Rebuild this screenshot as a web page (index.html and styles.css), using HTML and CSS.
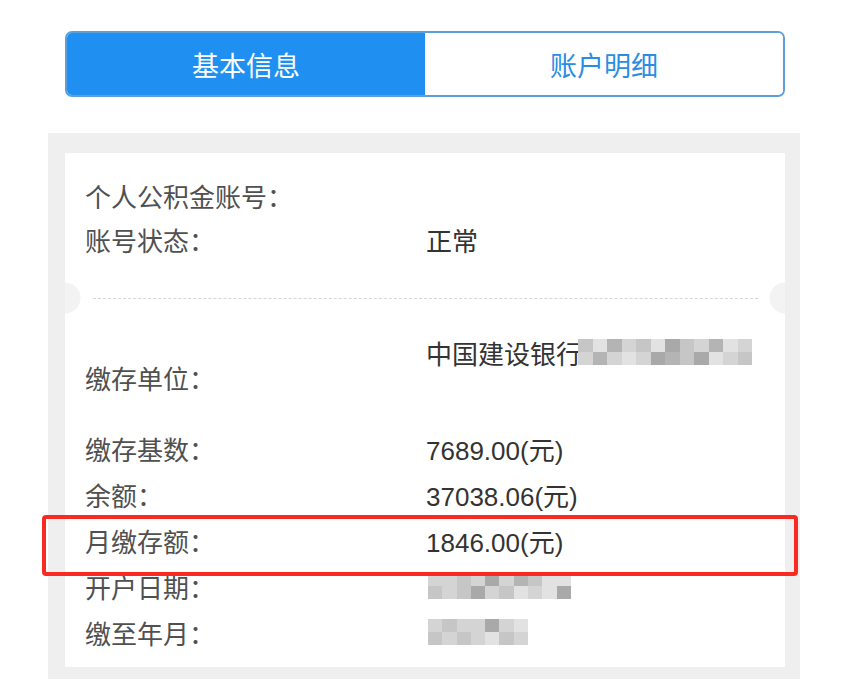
FILE: index.html
```html
<!DOCTYPE html>
<html lang="zh-CN">
<head>
  <meta charset="UTF-8">
  <meta name="viewport" content="width=device-width, initial-scale=1.0">
  <title>基本信息</title>
  <link rel="stylesheet" href="styles.css">
</head>
<body>
  <div class="tabs">
    <div class="tab active">基本信息</div>
    <div class="tab">账户明细</div>
  </div>

  <div class="panel">
    <div class="card">
      <div class="section top-section">
        <div class="row">
          <span class="label">个人公积金账号：</span>
          <span class="value"></span>
        </div>
        <div class="row">
          <span class="label">账号状态：</span>
          <span class="value">正常</span>
        </div>
      </div>

      <div class="divider"></div>

      <div class="section bottom-section">
        <div class="row tall">
          <span class="label">缴存单位：</span>
          <span class="value top">中国建设银行<span class="mosaic wide">
            <i class="m2"></i><i class="m4"></i><i class="m1"></i><i class="m3"></i><i class="m2"></i><i class="m4"></i><i class="m5"></i><i class="m2"></i><i class="m3"></i><i class="m1"></i><i class="m4"></i><i class="m3"></i>
            <i class="m3"></i><i class="m1"></i><i class="m3"></i><i class="m4"></i><i class="m3"></i><i class="m5"></i><i class="m1"></i><i class="m2"></i><i class="m5"></i><i class="m4"></i><i class="m3"></i><i class="m2"></i>
          </span></span>
        </div>
        <div class="row">
          <span class="label">缴存基数：</span>
          <span class="value">7689.00(元)</span>
        </div>
        <div class="row">
          <span class="label">余额：</span>
          <span class="value">37038.06(元)</span>
        </div>
        <div class="row highlight">
          <span class="label">月缴存额：</span>
          <span class="value">1846.00(元)</span>
        </div>
        <div class="row">
          <span class="label">开户日期：</span>
          <span class="value"><span class="mosaic date">
            <i class="m3"></i><i class="m3"></i><i class="m2"></i><i class="m3"></i><i class="m5"></i><i class="m3"></i><i class="m1"></i><i class="m2"></i><i class="m4"></i><i class="m4"></i>
            <i class="m2"></i><i class="m3"></i><i class="m2"></i><i class="m5"></i><i class="m3"></i><i class="m2"></i><i class="m4"></i><i class="m3"></i><i class="m4"></i><i class="m5"></i>
          </span></span>
        </div>
        <div class="row">
          <span class="label">缴至年月：</span>
          <span class="value"><span class="mosaic month">
            <i class="m3"></i><i class="m2"></i><i class="m3"></i><i class="m3"></i><i class="m5"></i><i class="m3"></i><i class="m4"></i>
            <i class="m2"></i><i class="m3"></i><i class="m2"></i><i class="m3"></i><i class="m4"></i><i class="m2"></i><i class="m3"></i>
          </span></span>
        </div>
      </div>
    </div>
  </div>
</body>
</html>
```

FILE: styles.css
```css
body {
  margin: 0;
  background: #fff;
  font-family: "Liberation Sans", "Noto Sans CJK SC", sans-serif;
  width: 841px;
  height: 680px;
  overflow: hidden;
}

.tabs {
  display: flex;
  box-sizing: border-box;
  width: 720px;
  height: 66px;
  margin: 31px 0 0 65px;
  border: 2px solid #5d9fd8;
  border-radius: 7px;
  overflow: hidden;
}

.tab {
  flex: 1;
  display: flex;
  align-items: center;
  justify-content: center;
  font-size: 27px;
  color: #2a8de3;
  background: #fff;
}

.tab.active {
  background: #1f90f1;
  color: #fff;
}

.panel {
  width: 752px;
  box-sizing: border-box;
  margin: 36px 0 0 48px;
  padding: 20px 15px 12px 17px;
  background: #efefef;
}

.card {
  position: relative;
  background: #fff;
  padding: 0 27px 12px 20px;
}

.top-section {
  padding: 20px 0 37px;
}

.bottom-section {
  padding-top: 31px;
}

.row {
  display: flex;
  align-items: center;
  height: 44px;
  font-size: 26px;
}

.bottom-section .row {
  height: 46px;
}

.bottom-section .row.tall {
  height: 96px;
}

.label {
  width: 341px;
  flex-shrink: 0;
  color: #505050;
}

.value {
  color: #333;
  display: flex;
  align-items: center;
}

.value.top {
  align-self: flex-start;
  height: 46px;
}

.divider {
  position: relative;
  margin: 0 -27px 0 -20px;
  height: 0;
}

.divider::before {
  content: "";
  position: absolute;
  left: 28px;
  right: 27px;
  top: 0;
  border-top: 1px dashed #d6d6d6;
}

.divider::after {
  content: "";
  position: absolute;
  left: 0;
  right: 0;
  top: -17px;
  height: 34px;
  background:
    radial-gradient(circle at 0 50%, #f3f3f3 15px, transparent 16px),
    radial-gradient(circle at 100% 50%, #f3f3f3 15px, transparent 16px);
}

.highlight {
  position: relative;
}

.highlight::after {
  content: "";
  position: absolute;
  left: -43px;
  right: -40px;
  top: -2px;
  bottom: -13px;
  border: 4px solid #fb2a20;
  border-radius: 4px;
}

.mosaic {
  display: grid;
  grid-auto-rows: 13px;
}

.mosaic i {
  display: block;
}

.mosaic.wide {
  grid-template-columns: repeat(12, 14.5px);
  margin-left: -4px;
}

.mosaic.date {
  grid-template-columns: repeat(10, 14.3px);
  margin-left: 2px;
}

.mosaic.month {
  grid-template-columns: repeat(7, 14.3px);
  margin-left: 2px;
}

.m1 { background: #b4b4b4; }
.m2 { background: #c6c6c6; }
.m3 { background: #d4d4d4; }
.m4 { background: #e2e2e2; }
.m5 { background: #a9a9a9; }
```
